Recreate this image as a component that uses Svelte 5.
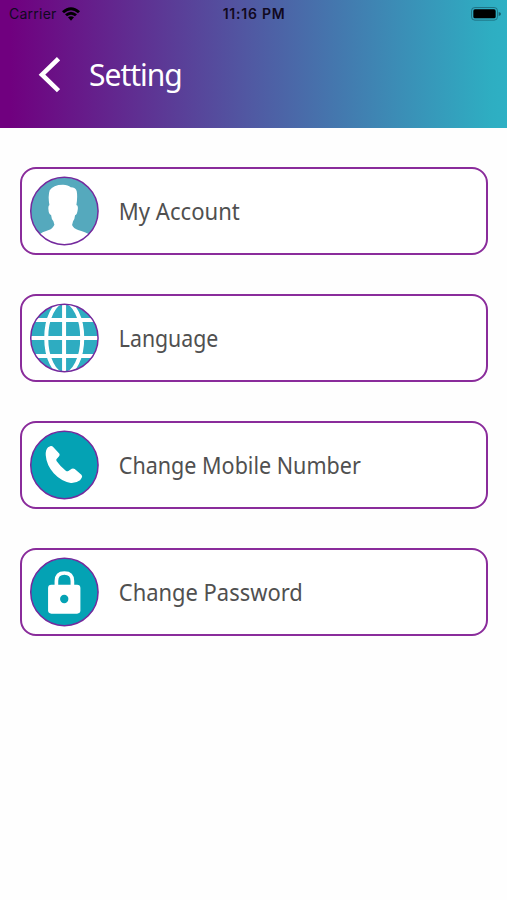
<script>
  const items = [
    { id: 'account', label: 'My Account', width: 121 },
    { id: 'language', label: 'Language', width: 99.5 },
    { id: 'phone', label: 'Change Mobile Number', width: 242 },
    { id: 'password', label: 'Change Password', width: 184 }
  ];
</script>

<div class="screen">
  <header>
    <div class="status">
      <div class="carrier">
        <span>Carrier</span>
        <svg width="18" height="14" viewBox="0 0 54 42">
          <path d="M0 13Q27-11 54 13L48 19Q27 0 6 19Z" />
          <path d="M9 22Q27 7 45 22L39 28Q27 18 15 28Z" />
          <path d="M18 31Q27 24 36 31L27 41Z" />
        </svg>
      </div>
      <span class="time">11:16 PM</span>
      <svg class="battery" width="30" height="14" viewBox="0 0 90 42">
        <rect x="1.5" y="1.5" width="78" height="38" rx="10" fill="none" stroke="#154e5c" stroke-opacity=".7" stroke-width="2.5" />
        <rect x="7" y="7" width="67" height="27" rx="5" />
        <path d="M83 15Q90 17 90 21Q90 25 83 27Z" fill="#16606c" />
      </svg>
    </div>
    <div class="bar">
      <svg class="back" width="24" height="38" viewBox="0 0 24 38">
        <path d="M22.500 2.700L6 18.700L22.500 34.700" fill="none" stroke="#fff" stroke-width="4.600" />
      </svg>
      <h1>Setting</h1>
    </div>
  </header>

  <main>
    {#each items as item}
      <div class="card">
        <svg class="icon" width="70" height="70" viewBox="42.800 48 210 210">
          <defs>
            <clipPath id="clip-{item.id}"><circle cx="149" cy="153" r="101" /></clipPath>
          </defs>
          <g clip-path="url(#clip-{item.id})">
            {#if item.id === 'account'}
              <rect x="44" y="48" width="210" height="210" fill="#55a9bd" />
              <path fill="#fff" d="M72 224Q82 216 100 211Q114 206 119 194L116 184Q110 177 109 165Q102 164 101 148Q100 137 104 135Q99 107 105 91Q115 74 145 74Q160 74 168 82Q183 82 186 94Q189 111 185 135Q191 136 189 149Q187 164 181 166Q180 178 175 184L172 195Q176 205 190 210Q216 217 226 226L230 260H66Z" />
            {:else if item.id === 'language'}
              <rect x="44" y="48" width="210" height="210" fill="#2eacc1" />
              <g fill="none" stroke="#fff" stroke-width="12">
                <path d="M148 48V258M44 153H254M44 99H254M44 207H254" />
                <ellipse cx="148.500" cy="153" rx="54" ry="108" />
              </g>
            {:else if item.id === 'phone'}
              <rect x="44" y="48" width="210" height="210" fill="#04a2b4" />
              <path fill="#fff" d="M100 100L108 96Q112 95 116 100L134 119Q136 123 133 127L125 136Q124 139 126 142Q137 158 154 171Q158 173 161 171L171 164Q176 162 180 165L200 182Q204 186 201 191L196 199Q184 208 168 207Q139 202 117 178Q95 153 93 124Q92 108 100 100Z" />
            {:else}
              <rect x="44" y="48" width="210" height="210" fill="#04a2b4" />
              <path d="M125 135V120Q125 96 149 96Q173 96 173 120V135" fill="none" stroke="#fff" stroke-width="11" />
              <rect x="100" y="131" width="97" height="87" rx="10" fill="#fff" />
              <circle cx="148.500" cy="174" r="12.500" fill="#04a2b4" />
            {/if}
          </g>
          <circle cx="149" cy="153" r="101" fill="none" stroke="#74299d" stroke-width="4.500" />
        </svg>
        <svg class="label" width="300" height="40">
          <text x="0.8" y="29" textLength={item.width} lengthAdjust="spacingAndGlyphs">{item.label}</text>
        </svg>
      </div>
    {/each}
  </main>
</div>

<style>
  :global(body) {
    margin: 0;
    background: #fff;
  }
  .screen {
    width: 507px;
    height: 900px;
    overflow: hidden;
    background: #fefefe;
  }
  header {
    height: 127.5px;
    background: linear-gradient(90deg, #70007f 0%, #70007f 2%, #505aa3 50%, #2eaec2 97%, #2eb0c4 100%);
  }
  .status {
    box-sizing: border-box;
    height: 27px;
    padding: 0 6px 0 9px;
    display: grid;
    grid-template-columns: 1fr auto 1fr;
    align-items: center;
    font-family: Inter, Roboto, sans-serif;
    font-size: 14px;
    line-height: 27px;
    letter-spacing: 0.25px;
    color: #11091f;
  }
  .carrier {
    display: flex;
    align-items: center;
    gap: 5.500px;
  }
  .time {
    font-weight: 600;
    letter-spacing: 0.75px;
    transform: translateX(-1px);
  }
  .battery {
    justify-self: end;
  }
  .bar {
    display: flex;
    align-items: center;
    height: 96px;
    padding-left: 36px;
  }
  h1 {
    margin: 0 0 0 29px;
    font: 400 30px/40px 'Noto Sans', sans-serif;
    letter-spacing: -1px;
    color: #fff;
  }
  main {
    display: flex;
    flex-direction: column;
    gap: 39px;
    padding: 39.5px 19.500px 0 20px;
  }
  .card {
    box-sizing: border-box;
    height: 88px;
    display: flex;
    align-items: center;
    padding-left: 7.300px;
    border: 2px solid #8a2c9b;
    border-radius: 16px;
    background: #fff;
  }
  .icon {
    flex: none;
  }
  .label {
    margin-left: 19px;
    flex: none;
    overflow: visible;
    font: 400 23.500px 'Noto Sans', sans-serif;
    fill: #505050;
  }
</style>
